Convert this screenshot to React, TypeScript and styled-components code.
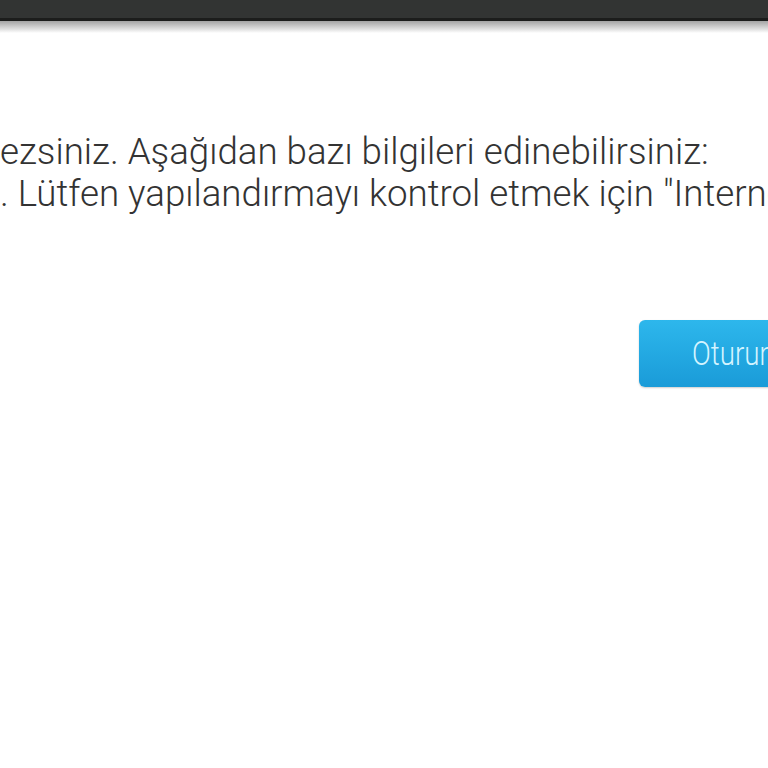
import React from "react";
import styled, { createGlobalStyle } from "styled-components";

const Global = createGlobalStyle`
  html, body { margin: 0; padding: 0; background: #ffffff; }
  body { width: 768px; height: 768px; overflow: hidden; font-family: Roboto, "Noto Sans", sans-serif; }
`;

const Page = styled.div`
  width: 768px;
  height: 768px;
  display: flex;
  flex-direction: column;
  background: #ffffff;
  overflow: hidden;
`;

const TopBar = styled.div`
  flex: 0 0 auto;
  height: 18px;
  background: #323433;
  border-bottom: 3px solid #1c1d1c;
`;

const Shadow = styled.div`
  flex: 0 0 auto;
  height: 12px;
  background: linear-gradient(#a4a4a4, #e6e6e6 75%, #ffffff);
`;

const Message = styled.div`
  margin-top: 98px;
  display: flex;
  flex-direction: column;
  font-family: Roboto, sans-serif;
  font-weight: 300;
  font-size: 36.7px;
  line-height: 42px;
  color: #333333;
  white-space: nowrap;
`;

const Line = styled.div<{ $indent: number }>`
  padding-left: ${(p) => p.$indent}px;
`;

const Actions = styled.div`
  margin-top: 105px;
  display: flex;
  justify-content: flex-start;
  padding-left: 639px;
`;

const Button = styled.button`
  flex: 0 0 auto;
  width: 200px;
  height: 67px;
  border: none;
  border-radius: 6px 0 0 6px;
  background: linear-gradient(#2db7ec, #1a9bd8);
  box-shadow: 0 1px 2px rgba(0, 0, 0, 0.2);
  text-align: left;
  padding: 0 0 0 53px;
  white-space: nowrap;
  overflow: hidden;
`;

const Label = styled.span`
  display: inline-block;
  color: #d4f4ff;
  font-family: Roboto, sans-serif;
  font-weight: 300;
  font-size: 33px;
  transform: scaleX(0.84);
  transform-origin: left center;
`;

export default function App() {
  return (
    <Page>
      <Global />
      <TopBar />
      <Shadow />
      <Message>
        <Line $indent={0}>ezsiniz. Aşağıdan bazı bilgileri edinebilirsiniz:</Line>
        <Line $indent={0}>. Lütfen yapılandırmayı kontrol etmek için "Internet</Line>
      </Message>
      <Actions>
        <Button>
          <Label>Oturum Aç</Label>
        </Button>
      </Actions>
    </Page>
  );
}
